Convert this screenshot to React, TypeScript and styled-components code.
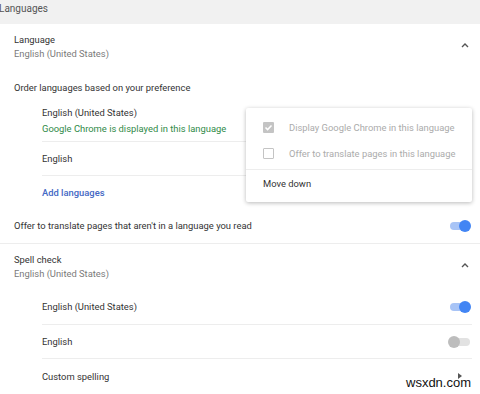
import React from 'react';
import styled, { createGlobalStyle } from 'styled-components';

const GlobalStyle = createGlobalStyle`
  body {
    margin: 0;
    background: #ffffff;
    font-family: Roboto, "Noto Sans", Arial, sans-serif;
  }
`;

const Page = styled.div`
  position: relative;
  width: 480px;
  height: 394px;
  overflow: hidden;
  background: #ffffff;
  font-size: 9.4px;
  color: #333333;
`;

const HeaderBar = styled.div`
  height: 24px;
  background: #f1f1f1;
  box-sizing: border-box;
  padding-top: 2px;
  line-height: 13px;
  font-size: 10px;
  color: #555555;
  text-indent: -1px;
`;

const Section = styled.div<{ $divider?: boolean }>`
  display: flex;
  align-items: flex-start;
  justify-content: space-between;
  box-sizing: border-box;
  height: 46px;
  padding: 9px 10px 0 14px;
  border-top: ${(p) => (p.$divider ? '1px solid #ededed' : 'none')};
`;

const Title = styled.div`
  line-height: 14px;
  color: #333333;
`;

const Subtitle = styled.div`
  line-height: 14px;
  color: #7a7a7a;
`;

const ChevronBox = styled.div`
  margin-top: 8px;
  width: 10px;
  height: 8px;
  display: flex;
`;

const Row = styled.div<{ $h: number; $indent?: boolean; $line?: boolean }>`
  display: flex;
  align-items: center;
  justify-content: space-between;
  box-sizing: border-box;
  height: ${(p) => p.$h}px;
  margin-left: ${(p) => (p.$indent ? 42 : 14)}px;
  margin-right: 8px;
  border-top: ${(p) => (p.$line ? '1px solid #ededed' : 'none')};
`;

const FullRow = styled(Row)`
  margin-left: 0;
  margin-right: 0;
  padding-left: 14px;
  padding-right: 8px;
`;

const LangItem = styled.div`
  box-sizing: border-box;
  height: 37px;
  margin-left: 42px;
  padding-top: 1px;
  line-height: 16px;
`;

const Green = styled.div`
  color: #2f8a48;
`;

const Link = styled.span`
  color: #4468c4;
  font-weight: 500;
`;

const Track = styled.div<{ $on: boolean }>`
  position: relative;
  width: 20px;
  height: 8px;
  border-radius: 4px;
  margin-right: 2px;
  background: ${(p) => (p.$on ? '#a8c4f6' : '#e2e2e2')};
`;

const Knob = styled.div<{ $on: boolean }>`
  position: absolute;
  top: -2px;
  left: ${(p) => (p.$on ? '9px' : '-2px')};
  width: 12px;
  height: 12px;
  border-radius: 50%;
  background: ${(p) => (p.$on ? '#4285f4' : '#bdbdbd')};
`;

const Menu = styled.div`
  position: absolute;
  left: 246px;
  top: 108px;
  width: 226px;
  box-sizing: border-box;
  padding: 6px 0 6px;
  background: #ffffff;
  box-shadow: 0 1px 4px rgba(0, 0, 0, 0.28);
  border-radius: 2px;
`;

const MenuItem = styled.div<{ $disabled?: boolean }>`
  display: flex;
  align-items: center;
  height: 26px;
  padding-left: 17px;
  color: ${(p) => (p.$disabled ? '#ababab' : '#333333')};
`;

const MenuDivider = styled.div`
  height: 1px;
  margin: 3px 0 0;
  background: #ededed;
`;

const Check = styled.div<{ $checked?: boolean }>`
  box-sizing: border-box;
  width: 11px;
  height: 11px;
  margin-right: 15px;
  border-radius: 1px;
  display: flex;
  align-items: center;
  justify-content: center;
  background: ${(p) => (p.$checked ? '#c4c4c4' : '#ffffff')};
  border: ${(p) => (p.$checked ? 'none' : '1.5px solid #c4c4c4')};
`;

const Watermark = styled.div`
  position: absolute;
  left: 406px;
  top: 375px;
  font-family: "Liberation Sans", Arial, sans-serif;
  font-size: 13px;
  color: #111111;
`;

function Toggle({ on }: { on: boolean }) {
  return (
    <Track $on={on}>
      <Knob $on={on} />
    </Track>
  );
}

function Chevron() {
  return (
    <ChevronBox>
      <svg width="10" height="8" viewBox="0 0 10 8">
        <polyline points="2,6 5,3 8,6" fill="none" stroke="#555" strokeWidth="1.4" />
      </svg>
    </ChevronBox>
  );
}

export default function App() {
  return (
    <>
      <GlobalStyle />
      <Page>
        <HeaderBar>Languages</HeaderBar>

        <Section>
          <div>
            <Title>Language</Title>
            <Subtitle>English (United States)</Subtitle>
          </div>
          <Chevron />
        </Section>

        <Row $h={34}>Order languages based on your preference</Row>

        <LangItem>
          <div>English (United States)</div>
          <Green>Google Chrome is displayed in this language</Green>
        </LangItem>
        <Row $h={34} $indent $line>
          English
        </Row>
        <Row $h={33} $indent $line>
          <Link>Add languages</Link>
        </Row>

        <FullRow $h={35}>
          <span>Offer to translate pages that aren't in a language you read</span>
          <Toggle on />
        </FullRow>

        <Section $divider>
          <div>
            <Title>Spell check</Title>
            <Subtitle>English (United States)</Subtitle>
          </div>
          <Chevron />
        </Section>

        <Row $h={35} $indent>
          <span>English (United States)</span>
          <Toggle on />
        </Row>
        <Row $h={34} $indent $line>
          <span>English</span>
          <Toggle on={false} />
        </Row>
        <Row $h={35} $indent $line>
          <span>Custom spelling</span>
          <svg width="8" height="8" viewBox="0 0 8 8" style={{ marginRight: 8 }}>
            <polygon points="2,1 6,4 2,7" fill="#555" />
          </svg>
        </Row>

        <Menu>
          <MenuItem $disabled>
            <Check $checked>
              <svg width="9" height="9" viewBox="0 0 9 9">
                <polyline points="1.5,4.5 3.6,6.6 7.5,2.4" fill="none" stroke="#fff" strokeWidth="1.5" />
              </svg>
            </Check>
            Display Google Chrome in this language
          </MenuItem>
          <MenuItem $disabled>
            <Check />
            Offer to translate pages in this language
          </MenuItem>
          <MenuDivider />
          <MenuItem>Move down</MenuItem>
        </Menu>

        <Watermark>wsxdn.com</Watermark>
      </Page>
    </>
  );
}
